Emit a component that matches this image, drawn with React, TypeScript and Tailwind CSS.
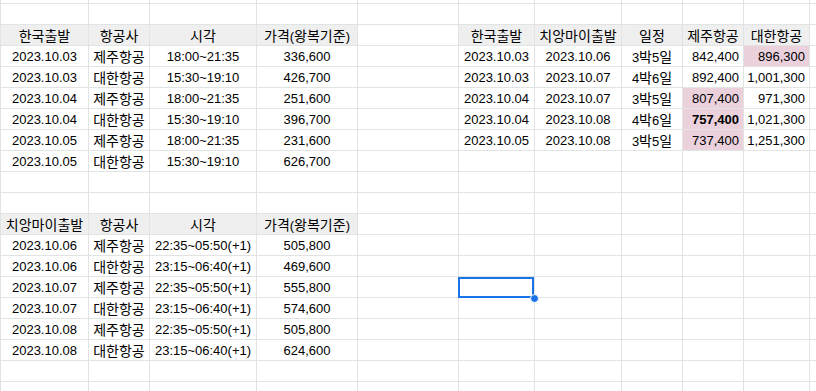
import React from 'react';

type Cell = {
  v?: string;
  head?: boolean;
  right?: boolean;
  pink?: boolean;
  bold?: boolean;
  selected?: boolean;
};

const COLS = 'grid-cols-[88px_61px_107px_101px_101px_76px_87px_61px_61px_66px_1fr]';

const outbound = [
  ['2023.10.03', '제주항공', '18:00~21:35', '336,600'],
  ['2023.10.03', '대한항공', '15:30~19:10', '426,700'],
  ['2023.10.04', '제주항공', '18:00~21:35', '251,600'],
  ['2023.10.04', '대한항공', '15:30~19:10', '396,700'],
  ['2023.10.05', '제주항공', '18:00~21:35', '231,600'],
  ['2023.10.05', '대한항공', '15:30~19:10', '626,700'],
];

const inbound = [
  ['2023.10.06', '제주항공', '22:35~05:50(+1)', '505,800'],
  ['2023.10.06', '대한항공', '23:15~06:40(+1)', '469,600'],
  ['2023.10.07', '제주항공', '22:35~05:50(+1)', '555,800'],
  ['2023.10.07', '대한항공', '23:15~06:40(+1)', '574,600'],
  ['2023.10.08', '제주항공', '22:35~05:50(+1)', '505,800'],
  ['2023.10.08', '대한항공', '23:15~06:40(+1)', '624,600'],
];

// 한국출발, 치앙마이출발, 일정, 제주항공, 대한항공
const combos: Cell[][] = [
  [{ v: '2023.10.03' }, { v: '2023.10.06' }, { v: '3박5일' }, { v: '842,400', right: true }, { v: '896,300', right: true, pink: true }],
  [{ v: '2023.10.03' }, { v: '2023.10.07' }, { v: '4박6일' }, { v: '892,400', right: true }, { v: '1,001,300', right: true }],
  [{ v: '2023.10.04' }, { v: '2023.10.07' }, { v: '3박5일' }, { v: '807,400', right: true, pink: true }, { v: '971,300', right: true }],
  [{ v: '2023.10.04' }, { v: '2023.10.08' }, { v: '4박6일' }, { v: '757,400', right: true, pink: true, bold: true }, { v: '1,021,300', right: true }],
  [{ v: '2023.10.05' }, { v: '2023.10.08' }, { v: '3박5일' }, { v: '737,400', right: true, pink: true }, { v: '1,251,300', right: true }],
];

const blank = (n: number): Cell[] => Array.from({ length: n }, () => ({}));
const heads = (labels: string[]): Cell[] => labels.map((v) => ({ v, head: true }));
const plain = (vals: string[]): Cell[] => vals.map((v) => ({ v }));

function buildRows(): Cell[][] {
  const rows: Cell[][] = [];
  rows.push(blank(11));
  rows.push([
    ...heads(['한국출발', '항공사', '시각', '가격(왕복기준)']),
    {},
    ...heads(['한국출발', '치앙마이출발', '일정', '제주항공', '대한항공']),
    {},
  ]);
  outbound.forEach((r, i) => {
    const right = combos[i] ?? blank(5);
    rows.push([...plain(r), {}, ...right, {}]);
  });
  rows.push(blank(11));
  rows.push(blank(11));
  rows.push([...heads(['치앙마이출발', '항공사', '시각', '가격(왕복기준)']), ...blank(7)]);
  inbound.forEach((r, i) => {
    const extra = blank(7);
    if (i === 2) extra[1] = { selected: true };
    rows.push([...plain(r), ...extra]);
  });
  rows.push(blank(11));
  rows.push(blank(11));
  return rows;
}

// hangul in the CJK font runs narrower than the sheet's, so bump it a little
function Text({ value }: { value: string }) {
  const parts = value.split(/([\uac00-\ud7a3]+)/).filter(Boolean);
  return (
    <>
      {parts.map((p, i) =>
        /[\uac00-\ud7a3]/.test(p) ? (
          <span key={i} className="text-[14px]">
            {p}
          </span>
        ) : (
          <span key={i}>{p}</span>
        )
      )}
    </>
  );
}

function SheetCell({ cell, last }: { cell: Cell; last: boolean }) {
  const bg = cell.pink ? 'bg-[#ead1dc]' : cell.head ? 'bg-[#efefef]' : 'bg-white';
  return (
    <div
      className={`relative h-[21px] border-b ${last ? '' : 'border-r'} border-[#e2e3e3] ${bg} ${
        cell.right ? 'text-right pr-[4px]' : 'text-center'
      } ${cell.bold ? 'font-bold' : ''} overflow-hidden whitespace-nowrap pt-[2px] leading-[18px] ${
        cell.selected ? 'z-10 !overflow-visible' : ''
      }`}
    >
      {cell.v && <Text value={cell.v} />}
      {cell.selected && (
        <>
          <div className="absolute -left-px right-0 top-0 -bottom-px border-2 border-[#1a73e8]" />
          <div className="absolute -right-[5px] -bottom-[6px] h-[9px] w-[9px] rounded-full border border-white bg-[#1a73e8]" />
        </>
      )}
    </div>
  );
}

export default function App() {
  const rows = buildRows();
  return (
    <div
      className="h-[391px] w-[816px] overflow-hidden bg-white text-[13px] text-black"
      style={{ fontFamily: '"Liberation Sans", Arial, "Noto Sans CJK KR", sans-serif' }}
    >
      <div className={`grid ${COLS} border-l border-[#e2e3e3]`}>
        {/* top sliver of the row above */}
        {blank(11).map((_, i) => (
          <div key={`t${i}`} className={`h-[4px] border-b ${i === 10 ? '' : 'border-r'} border-[#e2e3e3]`} />
        ))}
        {rows.map((row, r) =>
          row.map((cell, c) => <SheetCell key={`${r}-${c}`} cell={cell} last={c === 10} />)
        )}
      </div>
    </div>
  );
}
